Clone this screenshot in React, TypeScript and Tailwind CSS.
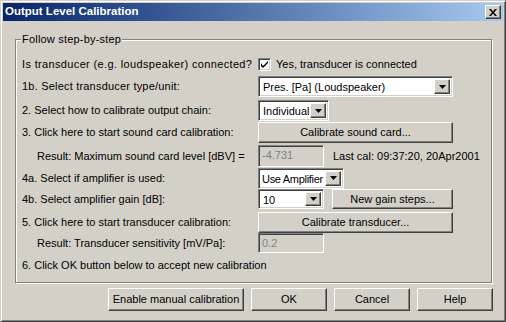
import React from 'react';

const raised =
  'border border-t-white border-l-white border-b-[#404040] border-r-[#404040] shadow-[inset_-1px_-1px_#808080]';
const sunken =
  'border border-t-[#808080] border-l-[#808080] border-b-white border-r-white shadow-[inset_1px_1px_#404040,inset_-1px_-1px_#d4d0c8]';

const Arrow = () => (
  <div className={`flex h-full w-[16px] shrink-0 items-center justify-center bg-[#d4d0c8] ${raised}`}>
    <svg width="7" height="4" viewBox="0 0 7 4">
      <path d="M0 0h7L3.5 4z" fill="#000" />
    </svg>
  </div>
);

const Combo = ({ value, width, valueClass = '' }: { value: string; width: string; valueClass?: string }) => (
  <div className={`flex h-[21px] items-stretch bg-white p-[2px] ${sunken} ${width}`}>
    <span className={`flex-1 overflow-hidden whitespace-nowrap pl-[2px] leading-[17px] ${valueClass}`}>{value}</span>
    <Arrow />
  </div>
);

const Button = ({ label, className }: { label: string; className: string }) => (
  <div className={`flex items-center justify-center whitespace-nowrap bg-[#d4d0c8] ${raised} ${className}`}>
    {label}
  </div>
);

const ReadOnly = ({ value }: { value: string }) => (
  <div className={`h-full w-[66px] bg-[#d4d0c8] pl-[3px] leading-[19px] text-[#808080] ${sunken}`}>
    {value}
  </div>
);

const Row = ({
  label,
  indent,
  className,
  labelClass = '',
  children,
}: {
  label: string;
  indent?: boolean;
  className: string;
  labelClass?: string;
  children?: React.ReactNode;
}) => (
  <div className={`flex items-center ${className}`}>
    <div className={`w-[236px] shrink-0 whitespace-nowrap ${indent ? 'pl-[15px]' : ''} ${labelClass}`}>
      {label}
    </div>
    {children}
  </div>
);

export default function App() {
  return (
    <div
      className="h-[322px] w-[506px] overflow-hidden border border-t-[#d4d0c8] border-l-[#d4d0c8] border-b-[#404040] border-r-[#404040] bg-[#d4d0c8] text-[11px] text-black shadow-[inset_1px_1px_#fff,inset_-1px_-1px_#808080]"
      style={{ fontFamily: '"Liberation Sans", Arial, sans-serif' }}
    >
      <div className="mx-[2px] mt-[2px] flex h-[18px] items-center justify-between bg-linear-to-r from-[#0a246a] to-[#a6caf0] pl-[2px] pr-[2px]">
        <span className="text-[11.5px] font-bold text-white">Output Level Calibration</span>
        <div className={`flex h-[14px] w-[16px] items-center justify-center bg-[#d4d0c8] ${raised}`}>
          <svg width="8" height="7" viewBox="0 0 8 7">
            <path d="M0 0h2l2 2.5L6 0h2L5 3.5 8 7H6L4 4.5 2 7H0l3-3.5z" fill="#000" />
          </svg>
        </div>
      </div>

      <div className="ml-[14px] mt-[18px] h-[244px] w-[477px] border border-[#808080] pl-[6px] shadow-[inset_1px_1px_#fff,1px_1px_#fff]">
        <div className="-ml-[1px] -mt-[7px] h-[13px] w-fit bg-[#d4d0c8] px-[1px] leading-[13px] tracking-[0.2px]">
          Follow step-by-step
        </div>

        <Row
          label="Is transducer (e.g. loudspeaker) connected?"
          labelClass="tracking-[0.35px]"
          className="mt-[8px] h-[20px]"
        >
          <div className={`flex h-[13px] w-[13px] items-center justify-center bg-white ${sunken}`}>
            <svg width="7" height="7" viewBox="0 0 7 7">
              <path d="M0 2v3l2 2L7 2V0L2 5z" fill="#000" />
            </svg>
          </div>
          <span className="ml-[5px]">Yes, transducer is connected</span>
        </Row>

        <Row label="1b. Select transducer type/unit:" labelClass="tracking-[0.2px]" className="mt-[2px] h-[21px]">
          <Combo value="Pres. [Pa] (Loudspeaker)" width="w-[195px]" />
        </Row>

        <Row label="2. Select how to calibrate output chain:" className="mt-[3px] h-[21px]">
          <Combo value="Individual" width="w-[71px]" />
        </Row>

        <Row label="3. Click here to start sound card calibration:" className="mt-[1px] h-[21px]">
          <Button label="Calibrate sound card..." className="h-[21px] w-[195px]" />
        </Row>

        <Row label="Result: Maximum sound card level [dBV] =" indent className="mt-[2px] h-[22px]">
          <ReadOnly value="-4.731" />
          <span className="ml-[9px]">Last cal: 09:37:20, 20Apr2001</span>
        </Row>

        <Row label="4a. Select if amplifier is used:" className="h-[22px]">
          <Combo value="Use Amplifier" width="w-[86px]" valueClass="!pl-[1px] tracking-[-0.3px]" />
        </Row>

        <Row label="4b. Select amplifier gain [dB]:" className="h-[20px]">
          <div className="flex h-full items-stretch">
            <Combo value="10" width="w-[66px] !h-[20px]" />
            <Button label="New gain steps..." className="ml-[8px] w-[121px]" />
          </div>
        </Row>

        <Row label="5. Click here to start transducer calibration:" className="mt-[3px] h-[21px]">
          <Button label="Calibrate transducer..." className="h-[21px] w-[195px]" />
        </Row>

        <Row label="Result: Transducer sensitivity [mV/Pa]:" indent className="h-[20px]">
          <ReadOnly value="0.2" />
        </Row>

        <Row label="6. Click OK button below to accept new calibration" className="mt-[3px] h-[18px]" />
      </div>

      <div className="mr-[12px] mt-[5px] flex justify-end gap-[7px]">
        <Button label="Enable manual calibration" className="h-[23px] w-[136px]" />
        <Button label="OK" className="h-[23px] w-[76px]" />
        <Button label="Cancel" className="h-[23px] w-[76px]" />
        <Button label="Help" className="h-[23px] w-[76px]" />
      </div>
    </div>
  );
}
